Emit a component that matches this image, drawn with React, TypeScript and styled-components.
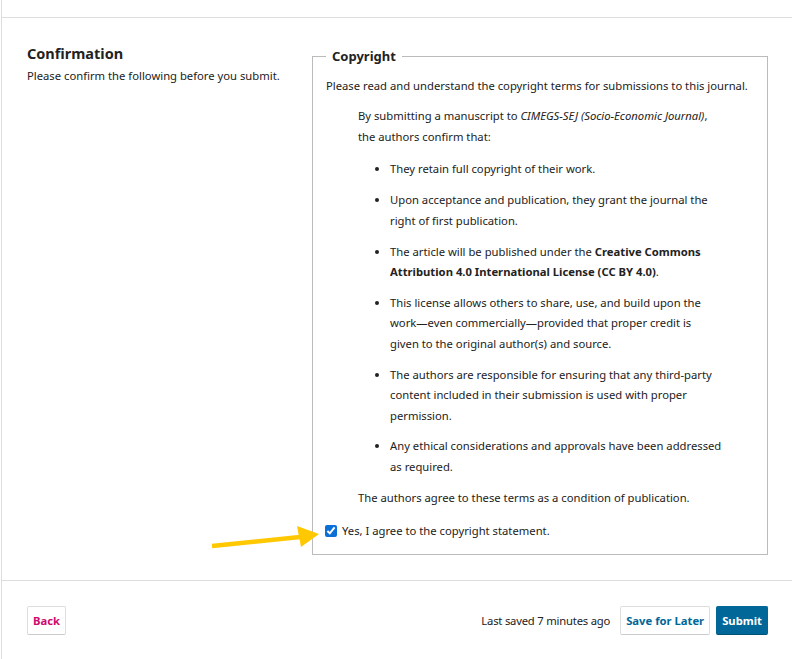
import React, { useState } from "react";
import styled, { createGlobalStyle } from "styled-components";

const GlobalStyle = createGlobalStyle`
  html, body {
    margin: 0;
    padding: 0;
    background: #fff;
  }
  body {
    font-family: "Noto Sans", "Open Sans", sans-serif;
    color: #222;
    font-size: 11.25px;
  }
`;

const Page = styled.div`
  position: relative;
  margin-left: 1px;
  border-left: 1px solid #ddd;
  min-height: 659px;
  box-sizing: border-box;
`;

const TopBar = styled.div`
  height: 17px;
  border-bottom: 1px solid #ddd;
`;

const Section = styled.section`
  display: grid;
  grid-template-columns: 285px 1fr;
  align-items: start;
  padding: 28px 24px 25px 25px;
  border-bottom: 1px solid #ddd;
`;

const Intro = styled.div`
  display: flex;
  flex-direction: column;
`;

const Title = styled.h2`
  margin: -1px 0 0;
  font-size: 14.5px;
  font-weight: 700;
  line-height: 16px;
  color: #222;
`;

const Subtitle = styled.p`
  margin: 5px 0 0;
  line-height: 20px;
`;

const Fieldset = styled.fieldset`
  margin: 0;
  padding: 0 13px 13px;
  border: 1px solid #bbb;
  min-width: 0;
`;

const Legend = styled.legend`
  padding: 0 6px;
  font-size: 13px;
  font-weight: 700;
  line-height: 20px;
`;

const Lead = styled.p`
  margin: 0;
  line-height: 20.4px;
  padding-top: 10px;
`;

const Quote = styled.blockquote`
  margin: 10px 20px 0 32px;
  line-height: 20.5px;

  p {
    margin: 0;
  }

  em {
    font-style: italic;
  }
`;

const Terms = styled.ul`
  margin: 12px 0 11px;
  padding-left: 32px;
  list-style: disc;
`;

const Term = styled.li`
  margin-bottom: 10.3px;
  white-space: nowrap;

  &:last-child {
    margin-bottom: 0;
  }

  strong {
    font-weight: 700;
  }
`;

const Agree = styled.label`
  display: flex;
  align-items: center;
  gap: 5px;
  margin-top: 12px;
  line-height: 20px;
  cursor: pointer;
`;

const Check = styled.input`
  margin: 0 0 0 -1px;
  width: 12px;
  height: 12px;
  accent-color: #0b6fd8;
`;

const Footer = styled.footer`
  display: flex;
  align-items: center;
  padding: 25px 24px 0 25px;
`;

const Spacer = styled.div`
  flex: 1;
`;

const Saved = styled.span`
  margin-right: 10px;
  letter-spacing: -0.2px;
`;

const Button = styled.button<{ $tone: "back" | "plain" | "primary" }>`
  height: 29px;
  padding: 0 5px;
  font-family: inherit;
  font-size: 11.25px;
  font-weight: 700;
  border-radius: 2px;
  cursor: pointer;
  border: 1px solid ${({ $tone }) => ($tone === "primary" ? "#006798" : "#ddd")};
  border-bottom-color: ${({ $tone }) => ($tone === "primary" ? "#005377" : "#ccc")};
  background: ${({ $tone }) => ($tone === "primary" ? "#006798" : "#fff")};
  color: ${({ $tone }) =>
    $tone === "back" ? "#d00a6c" : $tone === "primary" ? "#fff" : "#006798"};
  & + & {
    margin-left: 6px;
  }
`;

const Arrow = styled.svg`
  position: absolute;
  left: 205px;
  top: 522px;
  pointer-events: none;
`;

export default function App() {
  const [agreed, setAgreed] = useState(true);

  return (
    <>
      <GlobalStyle />
      <Page>
        <TopBar />
        <Section>
          <Intro>
            <Title>Confirmation</Title>
            <Subtitle>Please confirm the following before you submit.</Subtitle>
          </Intro>
          <Fieldset>
            <Legend>Copyright</Legend>
            <Lead>
              Please read and understand the copyright terms for submissions to this journal.
            </Lead>
            <Quote>
              <p>
                By submitting a manuscript to <em>CIMEGS-SEJ (Socio-Economic Journal)</em>,
                <br />
                the authors confirm that:
              </p>
              <Terms>
                <Term>They retain full copyright of their work.</Term>
                <Term>
                  Upon acceptance and publication, they grant the journal the
                  <br />
                  right of first publication.
                </Term>
                <Term>
                  The article will be published under the <strong>Creative Commons</strong>
                  <br />
                  <strong>Attribution 4.0 International License (CC BY 4.0)</strong>.
                </Term>
                <Term>
                  This license allows others to share, use, and build upon the
                  <br />
                  work—even commercially—provided that proper credit is
                  <br />
                  given to the original author(s) and source.
                </Term>
                <Term>
                  The authors are responsible for ensuring that any third-party
                  <br />
                  content included in their submission is used with proper
                  <br />
                  permission.
                </Term>
                <Term>
                  Any ethical considerations and approvals have been addressed
                  <br />
                  as required.
                </Term>
              </Terms>
              <p>The authors agree to these terms as a condition of publication.</p>
            </Quote>
            <Agree>
              <Check
                type="checkbox"
                checked={agreed}
                onChange={(e) => setAgreed(e.target.checked)}
              />
              Yes, I agree to the copyright statement.
            </Agree>
          </Fieldset>
        </Section>
        <Footer>
          <Button $tone="back">Back</Button>
          <Spacer />
          <Saved>Last saved 7 minutes ago</Saved>
          <Button $tone="plain">Save for Later</Button>
          <Button $tone="primary">Submit</Button>
        </Footer>
        <Arrow width="120" height="32" viewBox="0 0 120 32">
          <line x1="5" y1="24" x2="93" y2="15" stroke="#ffc800" strokeWidth="4.5" />
          <polygon points="90,4 112,12 94,25" fill="#ffc800" />
        </Arrow>
      </Page>
    </>
  );
}
